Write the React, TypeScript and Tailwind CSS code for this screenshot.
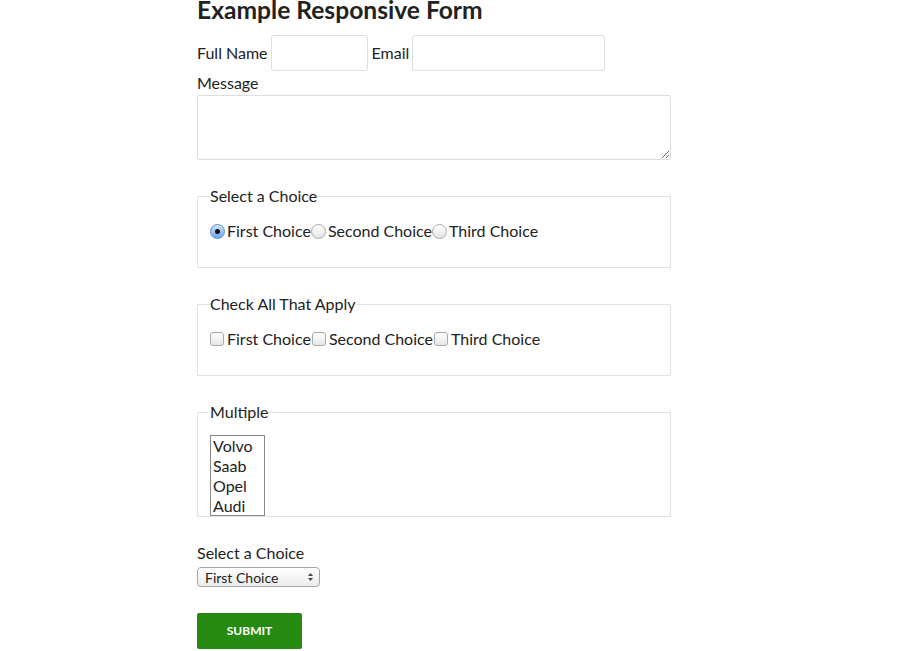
import React from 'react'

const choices = ['First Choice', 'Second Choice', 'Third Choice']
const cars = ['Volvo', 'Saab', 'Opel', 'Audi']

const Radio = ({ checked }: { checked?: boolean }) => (
  <span
    className={
      checked
        ? 'flex h-[15px] w-[15px] items-center justify-center rounded-full border border-[#5b8fd0] bg-gradient-to-b from-[#cfe3fa] to-[#6fa8e8]'
        : 'flex h-[15px] w-[15px] items-center justify-center rounded-full border border-[#a9a9a9] bg-gradient-to-b from-white to-[#e4e4e4]'
    }
  >
    {checked && <span className="h-[5px] w-[5px] rounded-full bg-[#111]" />}
  </span>
)

const Check = () => (
  <span className="h-[14px] w-[14px] rounded-[3px] border border-[#a9a9a9] bg-gradient-to-b from-white to-[#e6e6e6]" />
)

const App = () => {
  return (
    <div className="min-h-screen bg-white font-['Lato','Liberation_Sans',sans-serif] text-[16px] text-[#222]">
      <form className="ml-[197px] w-[474px]" onSubmit={(e) => e.preventDefault()}>
        <h1 className="-mt-[5px] text-[24.6px] font-bold leading-[29px]">Example Responsive Form</h1>

        <div className="mt-[11px] flex items-center">
          <label className="mr-[3px]">Full Name</label>
          <input type="text" className="h-[36px] w-[97px] rounded-[3px] border border-[#dedede] bg-white outline-none" />
          <label className="ml-[4px] mr-[3px]">Email</label>
          <input type="text" className="h-[36px] w-[193px] rounded-[3px] border border-[#dedede] bg-white outline-none" />
        </div>

        <div className="mt-[2px] leading-[20px]">Message</div>
        <textarea className="mt-[2px] block h-[65px] w-[474px] rounded-[2px] border border-[#dedede] bg-white outline-none" />

        <fieldset className="mt-[26px] border border-[#e3e3e3] px-[12px] pb-[26px] pt-[15px]">
          <legend className="leading-[20px]">Select a Choice</legend>
          <div className="flex items-center leading-[20px]">
            {choices.map((c, i) => (
              <label key={c} className="flex items-center">
                <Radio checked={i === 0} />
                <span className="ml-[2px]">{c}</span>
              </label>
            ))}
          </div>
        </fieldset>

        <fieldset className="mt-[26px] border border-[#e3e3e3] px-[12px] pb-[26px] pt-[15px]">
          <legend className="leading-[20px]">Check All That Apply</legend>
          <div className="flex items-center gap-[1px] leading-[20px]">
            {choices.map((c) => (
              <label key={c} className="flex items-center">
                <Check />
                <span className="ml-[3px]">{c}</span>
              </label>
            ))}
          </div>
        </fieldset>

        <fieldset className="mt-[26px] border border-[#e3e3e3] px-[12px] pt-[13px]">
          <legend className="leading-[20px]">Multiple</legend>
          <div className="h-[81px] w-[55px] overflow-hidden border border-[#8a8a8a] px-[2px] text-[16px] leading-[20px]">
            {cars.map((c) => (
              <div key={c}>{c}</div>
            ))}
          </div>
        </fieldset>

        <div className="mt-[26px] leading-[20px]">Select a Choice</div>
        <div className="mt-[4px] flex h-[20px] w-[123px] items-center justify-between rounded-[4px] border border-[#a6a6a6] bg-gradient-to-b from-white to-[#ececec] pl-[7px] pr-[5px] text-[14px]">
          <span>First Choice</span>
          <svg width="7" height="10" viewBox="0 0 7 10">
            <path d="M3.5 1 L6 4 H1 Z" fill="#444" />
            <path d="M3.5 9 L6 6 H1 Z" fill="#444" />
          </svg>
        </div>

        <button
          type="submit"
          className="mt-[26px] h-[36px] w-[105px] rounded-[2px] bg-[#268a12] text-[12px] font-bold text-white"
        >
          SUBMIT
        </button>
      </form>
    </div>
  )
}

export default App
